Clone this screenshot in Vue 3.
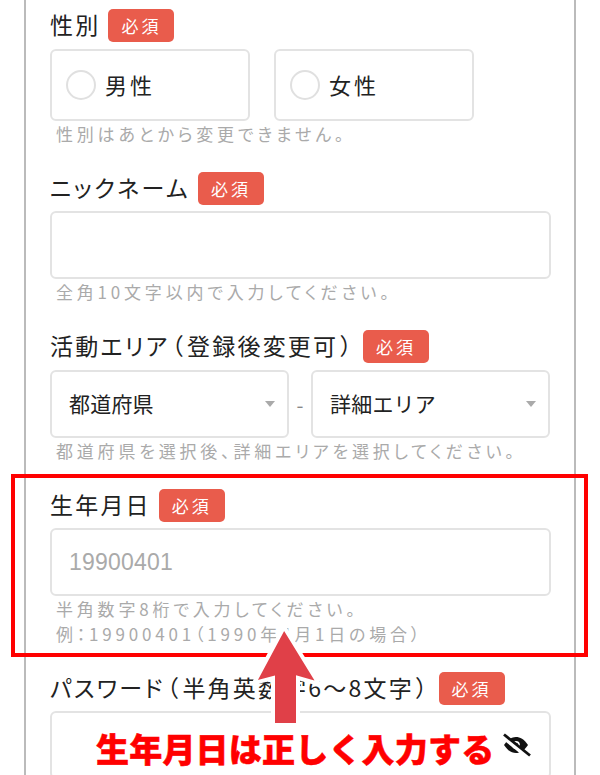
<script setup>
const areaHint = '都道府県を選択後、詳細エリアを選択してください。'
</script>

<template>
  <div class="page">
    <div class="card">
      <section class="field">
        <div class="head"><span class="label">性別</span><span class="badge">必須</span></div>
        <div class="radios">
          <div class="radio"><span class="circle"></span><span class="txt">男性</span></div>
          <div class="radio"><span class="circle"></span><span class="txt">女性</span></div>
        </div>
        <p class="hint">性別はあとから変更できません。</p>
      </section>
      <section class="field">
        <div class="head"><span class="label kana">ニックネーム</span><span class="badge">必須</span></div>
        <div class="input"></div>
        <p class="hint">全角10文字以内で入力してください。</p>
      </section>
      <section class="field">
        <div class="head"><span class="label">活動エリア<span class="po">（</span>登録後変更可<span class="pc">）</span></span><span class="badge">必須</span></div>
        <div class="selects">
          <div class="input select"><span class="txt">都道府県</span><i class="caret"></i></div>
          <span class="dash">-</span>
          <div class="input select"><span class="txt">詳細エリア</span><i class="caret"></i></div>
        </div>
        <p class="hint">{{ areaHint }}</p>
      </section>
      <section class="field">
        <div class="head"><span class="label">生年月日</span><span class="badge">必須</span></div>
        <div class="input placeholder"><span>19900401</span></div>
        <p class="hint">半角数字8桁で入力してください。</p>
        <p class="hint">例：19900401（1990年4月1日の場合）</p>
      </section>
      <section class="field">
        <div class="head"><span class="label">パスワード<span class="po">（</span>半角英数字6～8文字<span class="pc">）</span></span><span class="badge">必須</span></div>
        <div class="input pw">
          <svg class="eye" viewBox="0 0 30 24" width="30" height="24">
            <path d="M3 12C7 6 11 4 15 4s8 2 12 8c-4 6-8 8-12 8S7 18 3 12z" fill="#111" />
            <circle cx="15" cy="12" r="3.900" fill="#fff" />
            <circle cx="15" cy="12" r="2.200" fill="#111" />
            <path d="M3 4.500L24 21.500" stroke="#fff" stroke-width="4.500" />
            <path d="M3 1.500L29 22.500" stroke="#111" stroke-width="2.800" />
          </svg>
        </div>
      </section>
    </div>

    <div class="frame"></div>
    <svg class="arrow" viewBox="0 0 600 775" width="600" height="775">
      <path d="M284 627L254 683L273 678V725H298V678L319 684Z" fill="#e04048" stroke="#fff" stroke-width="4" stroke-linejoin="miter" />
    </svg>
    <div class="notice">生年月日は正しく入力する</div>
  </div>
</template>

<style scoped>
.page {
  position: relative;
  width: 600px;
  height: 775px;
  overflow: hidden;
  background: #fff;
  font-family: "Noto Sans CJK JP", "Noto Sans", sans-serif;
  font-feature-settings: "palt";
  font-weight: 400;
  color: #222;
}
.card {
  box-sizing: border-box;
  width: 552px;
  height: 775px;
  margin-left: 24px;
  padding: 9px 24px 0;
  border-left: 2px solid #bbb;
  border-right: 2px solid #bbb;
  overflow: hidden;
}
.field {
  margin-bottom: 26px;
}
.head {
  display: flex;
  align-items: center;
  height: 33px;
  margin-bottom: 6px;
}
.label {
  position: relative;
  top: -1px;
  font-size: 23px;
  letter-spacing: 2.2px;
  line-height: 33px;
  white-space: nowrap;
}
.kana {
  letter-spacing: 2.4px;
}
.po {
  margin-left: 2px;
  margin-right: 2px;
}
.pc {
  margin-left: 2px;
  margin-right: 1px;
}
.badge {
  box-sizing: border-box;
  width: 66px;
  height: 33px;
  margin-left: 8px;
  border-radius: 5px;
  background: #e95c4c;
  color: #fff;
  font-size: 17px;
  letter-spacing: 3px;
  line-height: 33px;
  text-align: center;
}
.radios {
  display: flex;
  gap: 24px;
  margin-top: 7px;
}
.radio {
  box-sizing: border-box;
  display: flex;
  align-items: center;
  gap: 9px;
  width: 200px;
  height: 72px;
  padding-left: 14px;
  border: 2px solid #e3e3e3;
  border-radius: 6px;
  font-size: 22px;
  letter-spacing: 3px;
}
.circle {
  box-sizing: border-box;
  width: 30px;
  height: 30px;
  border: 2px solid #e0e0e0;
  border-radius: 50%;
}
.txt {
  margin-bottom: 2px;
}
.input {
  box-sizing: border-box;
  display: flex;
  align-items: center;
  width: 501px;
  height: 68px;
  padding: 0 17px;
  border: 2px solid #e3e3e3;
  border-radius: 6px;
  font-size: 22px;
}
.placeholder {
  color: #aaa;
  font-family: "Liberation Sans", sans-serif;
  font-size: 23px;
  letter-spacing: 0.2px;
}
.selects {
  display: flex;
  align-items: center;
  margin-top: 7px;
}
.select {
  flex: 1;
  width: auto;
  justify-content: space-between;
  padding-right: 12px;
  font-size: 21px;
  letter-spacing: 0.2px;
  font-feature-settings: normal;
}
.dash {
  width: 22px;
  color: #888;
  font-size: 20px;
  text-align: center;
}
.caret {
  width: 0;
  height: 0;
  border-left: 5.5px solid transparent;
  border-right: 5.5px solid transparent;
  border-top: 6px solid #aaa;
}
.hint {
  margin: 0;
  padding-left: 6px;
  color: #aaa;
  font-size: 17px;
  letter-spacing: 3.8px;
  line-height: 25px;
  white-space: nowrap;
}
.pw {
  justify-content: flex-end;
  padding-right: 18px;
}
.eye {
  display: block;
}
.frame {
  position: absolute;
  left: 11px;
  top: 474px;
  box-sizing: border-box;
  width: 577px;
  height: 183px;
  border: 4px solid #f00;
}
.arrow {
  position: absolute;
  left: 0;
  top: 0;
}
.notice {
  position: absolute;
  left: 96px;
  top: 724px;
  color: #f00;
  font-size: 33px;
  font-weight: 900;
  line-height: 48px;
  white-space: nowrap;
  font-feature-settings: normal;
  letter-spacing: 0.2px;
  -webkit-text-stroke: 0.5px #f00;
}
</style>
